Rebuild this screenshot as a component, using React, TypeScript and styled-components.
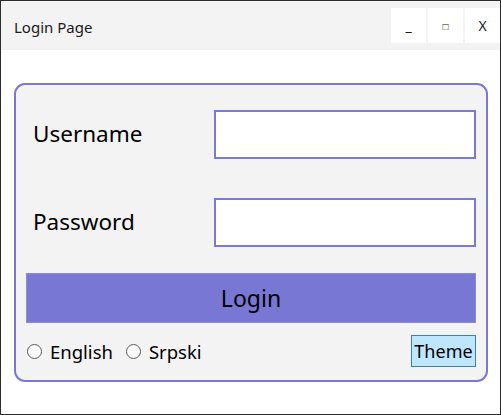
import { useState } from "react";
import styled, { createGlobalStyle } from "styled-components";

const GlobalStyle = createGlobalStyle`
  html, body {
    margin: 0;
    padding: 0;
    background: #ffffff;
  }
  * {
    box-sizing: border-box;
  }
`;

export default function App() {
  const [lang, setLang] = useState<string | null>(null);

  return (
    <Window>
      <GlobalStyle />
      <TitleBar>
        <Title>Login Page</Title>
        <Controls>
          <ControlButton>_</ControlButton>
          <ControlButton small>□</ControlButton>
          <ControlButton>X</ControlButton>
        </Controls>
      </TitleBar>
      <Body>
        <Panel>
          <FieldRow>
            <Label>Username</Label>
            <TextBox type="text" />
          </FieldRow>
          <FieldRow>
            <Label>Password</Label>
            <TextBox type="password" />
          </FieldRow>
          <LoginButton>Login</LoginButton>
          <BottomRow>
            <Languages>
              <RadioLabel>
                <Radio
                  type="radio"
                  name="lang"
                  checked={lang === "en"}
                  onChange={() => setLang("en")}
                />
                English
              </RadioLabel>
              <RadioLabel>
                <Radio
                  type="radio"
                  name="lang"
                  checked={lang === "sr"}
                  onChange={() => setLang("sr")}
                />
                Srpski
              </RadioLabel>
            </Languages>
            <ThemeButton>Theme</ThemeButton>
          </BottomRow>
        </Panel>
      </Body>
    </Window>
  );
}

const Window = styled.div`
  width: 501px;
  height: 415px;
  border: 1px solid #2b2b2b;
  background: #ffffff;
  font-family: "Noto Sans", "Open Sans", sans-serif;
  color: #000;
  display: flex;
  flex-direction: column;
`;

const TitleBar = styled.div`
  height: 49px;
  background: #f3f3f3;
  display: flex;
  align-items: flex-start;
  justify-content: space-between;
`;

const Title = styled.div`
  font-size: 15px;
  margin: 16px 0 0 13px;
  color: #1a1a1a;
`;

const Controls = styled.div`
  display: flex;
  gap: 2px;
  margin-top: 7px;
`;

const ControlButton = styled.div<{ small?: boolean }>`
  width: 35px;
  height: 35px;
  background: #ffffff;
  display: flex;
  align-items: center;
  justify-content: center;
  font-size: ${(p) => (p.small ? "10px" : "14px")};
  color: #1a1a1a;
`;

const Body = styled.div`
  flex: 1;
  padding: 33px 11px 0 13px;
`;

const Panel = styled.div`
  width: 474px;
  height: 299px;
  background: #f3f3f3;
  border: 2px solid #7b78d6;
  border-radius: 11px;
  padding: 25px 10px 13px 10px;
  display: flex;
  flex-direction: column;
`;

const FieldRow = styled.div`
  display: flex;
  align-items: center;
  justify-content: space-between;
  height: 49px;
  margin-bottom: 39px;

  &:nth-of-type(2) {
    margin-bottom: 26px;
  }
`;

const Label = styled.div`
  font-size: 22.5px;
  padding-left: 7px;
  margin-top: -2px;
`;

const TextBox = styled.input`
  width: 262px;
  height: 49px;
  border: 2px solid #7b78d6;
  background: #ffffff;
  outline: none;
  font-size: 18px;
  font-family: inherit;
`;

const LoginButton = styled.button`
  height: 50px;
  width: 100%;
  background: #7877d4;
  border: 1px solid #8c8ae0;
  font-family: inherit;
  font-size: 23px;
  color: #000;
  padding: 0;
`;

const BottomRow = styled.div`
  margin-top: 12px;
  display: flex;
  align-items: center;
  justify-content: space-between;
`;

const Languages = styled.div`
  display: flex;
  align-items: center;
  gap: 13px;
  padding-left: 1px;
`;

const RadioLabel = styled.label`
  display: flex;
  align-items: center;
  gap: 8px;
  font-size: 18.5px;
`;

const Radio = styled.input`
  appearance: none;
  width: 15px;
  height: 15px;
  margin: 0;
  border: 1px solid #5a5a5a;
  border-radius: 50%;
  background: #fafafa;
`;

const ThemeButton = styled.button`
  width: 65px;
  height: 32px;
  background: #bee6fd;
  border: 1px solid #3c7fb1;
  font-family: inherit;
  font-size: 18px;
  color: #000;
  padding: 0;
`;
